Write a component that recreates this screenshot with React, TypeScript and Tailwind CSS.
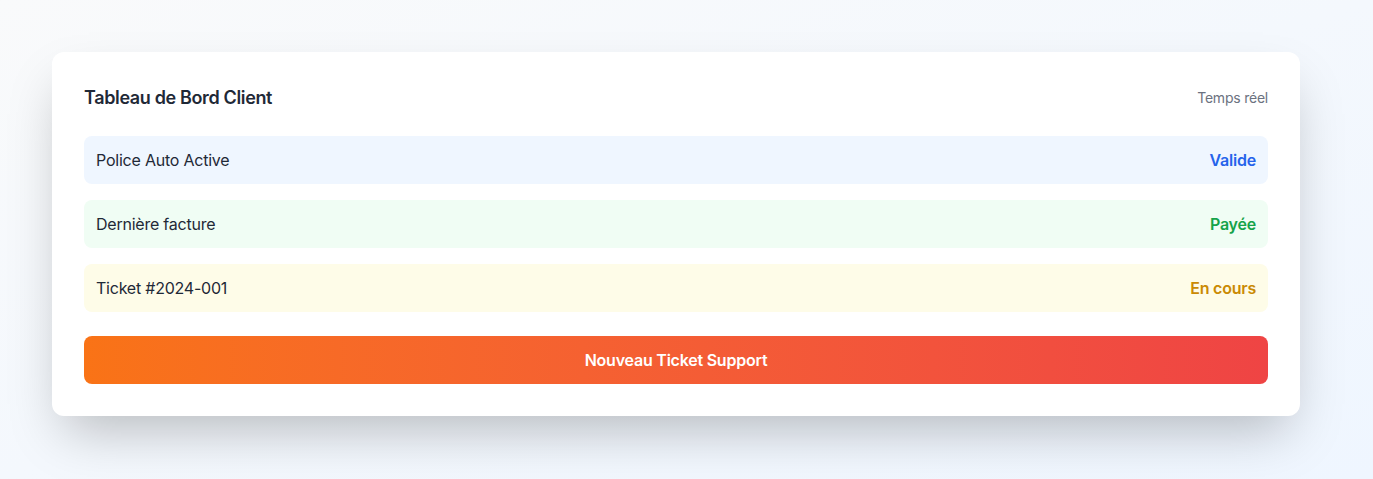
const rows = [
  { label: "Police Auto Active", status: "Valide", bg: "bg-[#eff6ff]", color: "text-[#2563eb]" },
  { label: "Dernière facture", status: "Payée", bg: "bg-[#f0fdf4]", color: "text-[#16a34a]" },
  { label: "Ticket #2024-001", status: "En cours", bg: "bg-[#fefce8]", color: "text-[#ca8a04]" },
];

const App = () => {
  return (
    <div
      className="min-h-screen bg-gradient-to-br from-[#f9fafb] to-[#eff6ff] p-[52px] tracking-[-0.014em]"
      style={{ fontFamily: "Inter, 'Noto Sans', sans-serif" }}
    >
      <div className="w-[1248px] bg-white rounded-xl shadow-2xl p-8">
        <div className="flex items-center justify-between mb-6">
          <h2 className="text-lg font-semibold text-[#1f2937] tracking-[-0.02em]">Tableau de Bord Client</h2>
          <span className="text-sm text-[#6b7280]">Temps réel</span>
        </div>

        <div className="space-y-4">
          {rows.map((r) => (
            <div key={r.label} className={`flex items-center justify-between px-3 py-3 rounded-lg ${r.bg}`}>
              <span className="text-base text-[#1f2937]">{r.label}</span>
              <span className={`text-base font-semibold ${r.color}`}>{r.status}</span>
            </div>
          ))}
        </div>

        <button className="mt-6 w-full py-3 rounded-lg bg-gradient-to-r from-[#f97316] to-[#ef4444] text-white text-base font-semibold">
          Nouveau Ticket Support
        </button>
      </div>
    </div>
  );
};

export default App;
